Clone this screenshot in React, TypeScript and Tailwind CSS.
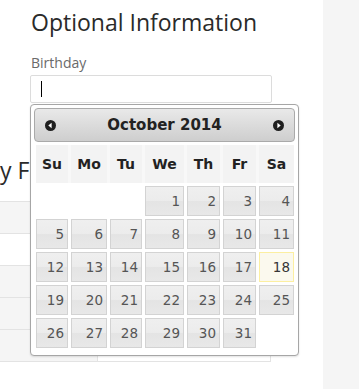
import React from "react";

const sans = { fontFamily: '"Open Sans", "Liberation Sans", sans-serif' };
const verdana = { fontFamily: '"DejaVu Sans", Verdana, sans-serif' };

const weekdays = ["Su", "Mo", "Tu", "We", "Th", "Fr", "Sa"];

// October 2014 starts on a Wednesday
const cells: (number | null)[] = [
  null, null, null,
  ...Array.from({ length: 31 }, (_, i) => i + 1),
];

function Arrow({ dir }: { dir: "prev" | "next" }) {
  return (
    <svg width="11" height="11" viewBox="0 0 11 11">
      <circle cx="5.5" cy="5.5" r="5.5" fill="#1f1f1f" />
      {dir === "prev" ? (
        <polygon points="3.3,5.5 6.6,2.8 6.6,8.2" fill="#fff" />
      ) : (
        <polygon points="7.7,5.5 4.4,2.8 4.4,8.2" fill="#fff" />
      )}
    </svg>
  );
}

function Datepicker() {
  return (
    <div
      className="absolute left-[30px] top-[104px] w-[269px] h-[252px] bg-white border border-[#a6a6a6] rounded-[4px] p-[3px] shadow-[0_1px_2px_rgba(0,0,0,0.12)]"
      style={verdana}
    >
      {/* title bar */}
      <div className="h-[34px] flex items-center justify-between px-[10px] border border-[#aaaaaa] rounded-[4px] bg-[linear-gradient(to_bottom,#e9e9e9,#cecece)]">
        <Arrow dir="prev" />
        <span className="text-[15px] font-bold text-[#222]">October 2014</span>
        <Arrow dir="next" />
      </div>

      {/* weekday header */}
      <div className="mt-[3px] mx-[2px] grid grid-cols-[32px_36px_32px_39px_33px_33px_35px] h-[38px] gap-[3px] bg-[#f8f8f8]">
        {weekdays.map(d => (
          <div key={d} className="flex items-center justify-center bg-[#f3f3f3] text-[14px] font-bold text-[#222]">
            {d}
          </div>
        ))}
      </div>

      {/* days */}
      <div className="mt-[3px] mx-[2px] grid grid-cols-[32px_36px_32px_39px_33px_33px_35px] auto-rows-[30px] gap-[3px]">
        {cells.map((n, i) =>
          n === null ? (
            <div key={`e${i}`} />
          ) : n === 18 ? (
            <div
              key={n}
              className="flex items-center justify-end pr-[3px] border border-[#fcefa1] bg-[#fbf9ee] text-[13.5px] text-[#363636]"
            >
              {n}
            </div>
          ) : (
            <div
              key={n}
              className="flex items-center justify-end pr-[3px] border border-[#d3d3d3] bg-[linear-gradient(to_bottom,#efefef_0%,#ececec_48%,#e4e4e4_52%,#e8e8e8_100%)] text-[13.5px] text-[#555]"
            >
              {n}
            </div>
          )
        )}
      </div>
    </div>
  );
}

export default function App() {
  return (
    <div className="w-[359px] h-[389px] flex bg-white overflow-hidden" style={sans}>
      <div className="relative flex-1">
        {/* optional info form */}
        <div className="px-[30px] pt-[8px]">
          <h2 className="text-[23px] leading-[28px] text-[#2a2a2a] pl-[1px]">Optional Information</h2>
          <label className="block mt-[17px] pl-[1px] text-[14px] leading-[20px] text-[#6a6a6a]">Birthday</label>
          <div className="mt-[2px] w-[242px] h-[28px] border border-[#dcdcdc] rounded-[2px] flex items-center pl-[10px]">
            <span className="w-[1px] h-[16px] bg-black" />
          </div>
        </div>

        {/* section behind the popup */}
        <h2 className="mt-[53px] text-[23px] leading-[28px] text-[#2a2a2a] whitespace-nowrap">y F</h2>
        <div className="mt-[17px] w-[271px] border-b border-r border-[#e3e3e3]">
          {[true, false, true, true, true].map((gray, i) => (
            <div key={i} className="flex h-[32px] border-t border-[#e3e3e3]">
              <div className={`w-[98px] border-r border-[#e3e3e3] ${gray ? "bg-[#f5f5f5]" : "bg-white"}`} />
              <div className="flex-1 bg-white" />
            </div>
          ))}
        </div>

        <Datepicker />
      </div>
      <div className="w-[36px] bg-[#f5f5f5]" />
    </div>
  );
}
